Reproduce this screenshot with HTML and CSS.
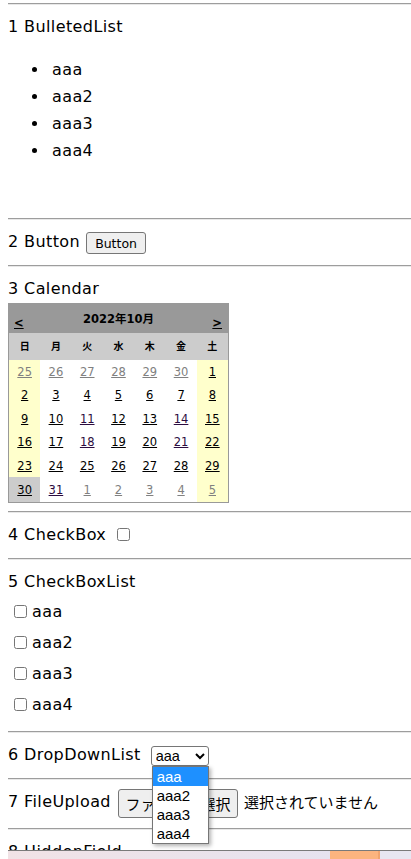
FILE: index.html
```html
<!DOCTYPE html>
<html lang="ja">
<head>
<meta charset="utf-8">
<title>Controls</title>
<link rel="stylesheet" href="styles.css">
</head>
<body>
<form class="page">
  <hr class="sep first">
  <div class="line">1 BulletedList</div>
  <ul class="bullets">
    <li>aaa</li>
    <li>aaa2</li>
    <li>aaa3</li>
    <li>aaa4</li>
  </ul>
  <div class="blank"></div>

  <hr class="sep">
  <div class="row h29">
    <span class="line">2 Button</span>
    <button type="button" class="btn">Button</button>
  </div>

  <hr class="sep">
  <div class="line">3 Calendar</div>
  <table class="cal">
    <tr class="cal-title">
      <td colspan="7">
        <div class="cal-nav">
          <a class="cal-prev" href="#">&lt;</a>
          <span class="cal-head">2022年10月</span>
          <a class="cal-next" href="#">&gt;</a>
        </div>
      </td>
    </tr>
    <tr class="cal-dh">
      <th>日</th><th>月</th><th>火</th><th>水</th><th>木</th><th>金</th><th>土</th>
    </tr>
    <tr class="r23">
      <td class="we om"><a href="#">25</a></td><td class="om"><a href="#">26</a></td><td class="om"><a href="#">27</a></td><td class="om"><a href="#">28</a></td><td class="om"><a href="#">29</a></td><td class="om"><a href="#">30</a></td><td class="we"><a href="#">1</a></td>
    </tr>
    <tr class="r24">
      <td class="we"><a href="#">2</a></td><td><a href="#">3</a></td><td><a href="#">4</a></td><td><a href="#">5</a></td><td><a href="#">6</a></td><td><a href="#">7</a></td><td class="we"><a href="#">8</a></td>
    </tr>
    <tr class="r23">
      <td class="we"><a href="#">9</a></td><td><a href="#">10</a></td><td><a class="v" href="#">11</a></td><td><a href="#">12</a></td><td><a href="#">13</a></td><td><a class="v" href="#">14</a></td><td class="we"><a href="#">15</a></td>
    </tr>
    <tr class="r24">
      <td class="we"><a href="#">16</a></td><td><a href="#">17</a></td><td><a class="v" href="#">18</a></td><td><a href="#">19</a></td><td><a href="#">20</a></td><td><a class="v" href="#">21</a></td><td class="we"><a href="#">22</a></td>
    </tr>
    <tr class="r23">
      <td class="we"><a href="#">23</a></td><td><a href="#">24</a></td><td><a href="#">25</a></td><td><a href="#">26</a></td><td><a href="#">27</a></td><td><a href="#">28</a></td><td class="we"><a href="#">29</a></td>
    </tr>
    <tr class="r25">
      <td class="today"><a href="#">30</a></td><td><a class="v" href="#">31</a></td><td class="om"><a href="#">1</a></td><td class="om"><a href="#">2</a></td><td class="om"><a href="#">3</a></td><td class="om"><a href="#">4</a></td><td class="we om"><a href="#">5</a></td>
    </tr>
  </table>

  <hr class="sep">
  <div class="row h29">
    <span class="line">4 CheckBox</span>
    <input type="checkbox" class="chk single">
  </div>

  <hr class="sep">
  <div class="line">5 CheckBoxList</div>
  <div class="cbl">
    <label class="cbl-item"><input type="checkbox" class="chk"><span class="cbl-text">aaa</span></label>
    <label class="cbl-item"><input type="checkbox" class="chk"><span class="cbl-text">aaa2</span></label>
    <label class="cbl-item"><input type="checkbox" class="chk"><span class="cbl-text">aaa3</span></label>
    <label class="cbl-item"><input type="checkbox" class="chk"><span class="cbl-text">aaa4</span></label>
  </div>

  <hr class="sep">
  <div class="row h29">
    <span class="line">6 DropDownList</span>
    <div class="ddl">
      <select class="sel">
        <option>aaa</option>
        <option>aaa2</option>
        <option>aaa3</option>
        <option>aaa4</option>
      </select>
      <div class="popup">
        <div class="opt on">aaa</div>
        <div class="opt">aaa2</div>
        <div class="opt">aaa3</div>
        <div class="opt">aaa4</div>
      </div>
    </div>
  </div>

  <hr class="sep">
  <div class="row h32">
    <span class="line">7 FileUpload</span>
    <button type="button" class="filebtn">ファイルを選択</button>
    <span class="filetext">選択されていません</span>
  </div>

  <hr class="sep">
  <div class="line last">8 HiddenField</div>
</form>
<div class="taskbar">
  <div class="tb-start"><span class="tb-dot"></span></div>
  <div class="tb-mid"></div>
  <div class="tb-hl"></div>
  <div class="tb-end"></div>
</div>
</body>
</html>
```

FILE: styles.css
```css
html {
  margin: 0;
  padding: 0;
  overflow: hidden;
}

body {
  margin: 0 0 0 8px;
  padding: 0;
  background: #fff;
  color: #000;
  font-family: "DejaVu Sans", "Noto Sans CJK JP", sans-serif;
  font-size: 16px;
  line-height: 27px;
  letter-spacing: 0.4px;
}

.page {
  margin: 0;
  display: block;
}

.sep {
  display: block;
  box-sizing: border-box;
  margin: 8px 0;
  height: 2px;
  border: 0;
  border-top: 1px solid #9d9d9d;
  border-bottom: 1px solid #e8e8e8;
}

.sep.first {
  margin-top: 3px;
}

.line {
  display: block;
  line-height: 27px;
  white-space: nowrap;
}

.bullets {
  margin: 16px 0;
  padding-left: 44px;
  list-style: none;
}

.bullets li {
  line-height: 27px;
}

.bullets li::before {
  content: "";
  display: inline-block;
  width: 5px;
  height: 5px;
  border-radius: 50%;
  background: #000;
  margin-left: -20px;
  margin-right: 15px;
  vertical-align: 3px;
}

.blank {
  height: 30px;
}

.row {
  display: flex;
  align-items: flex-start;
}

.h29 {
  height: 29px;
}

.h32 {
  height: 32px;
}

.btn {
  margin: 4px 0 0 6px;
  width: 60px;
  height: 22px;
  padding: 0;
  font-family: "DejaVu Sans", sans-serif;
  font-size: 12.5px;
  letter-spacing: 0;
  color: #000;
  background: #efefef;
  border: 1px solid #767676;
  border-radius: 3px;
}

.chk {
  width: 13px;
  height: 13px;
  margin: 0;
}

.chk.single {
  margin: 7px 0 0 11px;
}

/* Calendar */
.cal {
  margin-top: 1px;
  width: 221px;
  height: 200px;
  border: 1px solid #999;
  border-spacing: 0;
  border-collapse: separate;
  table-layout: fixed;
  background: #fff;
  color: #000;
  font-family: "DejaVu Sans", "Noto Sans CJK JP", sans-serif;
  font-size: 11.5px;
  line-height: 14px;
  letter-spacing: 0;
}

.cal td,
.cal th {
  padding: 0;
  text-align: center;
  vertical-align: middle;
}

.cal-title td {
  height: 29px;
  background: #999;
}

.cal-nav {
  display: flex;
  height: 29px;
  font-weight: bold;
}

.cal-prev,
.cal-next {
  width: 34px;
  align-self: flex-end;
  padding-bottom: 3px;
  color: #000;
  text-decoration: underline;
}

.cal-prev {
  text-align: left;
  padding-left: 5px;
  box-sizing: border-box;
}

.cal-next {
  text-align: right;
  padding-right: 6px;
  box-sizing: border-box;
}

.cal-head {
  flex: 1;
  align-self: center;
  text-align: center;
}

.cal-dh th {
  height: 27px;
  background: #ccc;
  font-size: 10px;
  font-weight: bold;
}

.r23 td {
  height: 23px;
}

.r24 td {
  height: 24px;
}

.r25 td {
  height: 25px;
}

.cal a {
  color: #000;
  text-decoration: underline;
}

.cal a.v {
  color: #2c0c40;
}

.cal .we {
  background: #ffffcc;
}

.cal .today {
  background: #ccc;
}

.cal .om a {
  color: #808080;
}

/* CheckBoxList */
.cbl {
  display: flex;
  flex-direction: column;
  gap: 2px;
  padding: 2px 0 4px;
}

.cbl-item {
  display: flex;
  align-items: center;
  height: 29px;
}

.cbl-item .chk {
  margin-left: 6px;
}

.cbl-text {
  margin-left: 5px;
}

/* DropDownList */
.ddl {
  position: relative;
  margin: 5px 0 0 10px;
}

.sel {
  display: block;
  width: 58px;
  height: 20px;
  margin: 0;
  font-family: "Liberation Sans", Arial, sans-serif;
  font-size: 14.5px;
  letter-spacing: 0;
  color: #000;
  background: #fff;
  border: 1px solid #767676;
  border-radius: 3px;
}

.popup {
  position: absolute;
  left: 1px;
  top: 20px;
  z-index: 10;
  width: 57px;
  box-sizing: border-box;
  background: #fff;
  border: 1px solid #767676;
  box-shadow: 2px 2px 4px rgba(0, 0, 0, 0.3);
  font-family: "Liberation Sans", Arial, sans-serif;
  font-size: 15px;
  letter-spacing: 0;
}

.opt {
  height: 19px;
  line-height: 19px;
  padding-left: 4px;
  white-space: nowrap;
}

.opt.on {
  background: #1e90ff;
  color: #fff;
}

/* FileUpload */
.filebtn {
  margin: 1px 0 0 7px;
  width: 120px;
  height: 29px;
  padding: 0;
  font-family: "Noto Sans CJK JP", sans-serif;
  font-size: 15px;
  letter-spacing: 0;
  color: #000;
  background: #efefef;
  border: 1px solid #767676;
  border-radius: 3px;
  white-space: nowrap;
}

.filetext {
  margin-left: 6px;
  font-family: "Noto Sans CJK JP", sans-serif;
  font-size: 15px;
  line-height: 27px;
  letter-spacing: 0;
  white-space: nowrap;
}

.last {
  height: 12px;
  overflow: hidden;
}

/* Bottom strip */
.taskbar {
  display: flex;
  height: 8px;
  margin: 0 0 0 -8px;
  border-top: 1px solid #7a7a7a;
}

.tb-start {
  width: 8px;
  display: flex;
  align-items: flex-end;
  padding-left: 1px;
  box-sizing: border-box;
  background: #f6f6f6;
  border-right: 1px solid #d8d8d8;
}

.tb-dot {
  width: 4px;
  height: 4px;
  border-radius: 50%;
  background: #f2a42a;
  margin-bottom: 1px;
}

.tb-mid {
  flex: 1;
  background: linear-gradient(90deg, #f1e3e6, #e6e3ef);
}

.tb-hl {
  width: 48px;
  background: #fcb47f;
  border-right: 2px solid #f2a46e;
}

.tb-end {
  width: 31px;
  background: #e7e6f1;
}
```
